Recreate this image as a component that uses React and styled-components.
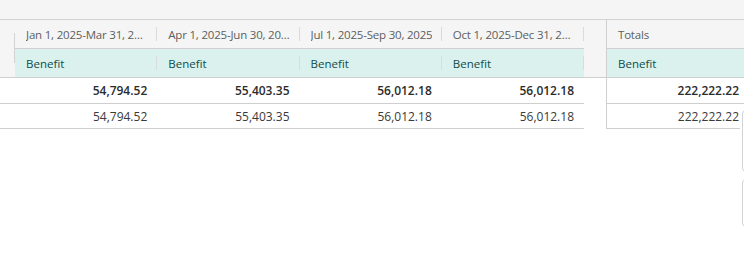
import React from 'react';
import styled, { createGlobalStyle } from 'styled-components';

const periods = [
  'Jan 1, 2025-Mar 31, 2025',
  'Apr 1, 2025-Jun 30, 2025',
  'Jul 1, 2025-Sep 30, 2025',
  'Oct 1, 2025-Dec 31, 2025',
];

const rows = [
  { bold: true, values: ['54,794.52', '55,403.35', '56,012.18', '56,012.18'], total: '222,222.22' },
  { bold: false, values: ['54,794.52', '55,403.35', '56,012.18', '56,012.18'], total: '222,222.22' },
];

const GlobalStyle = createGlobalStyle`
  html, body {
    margin: 0;
    padding: 0;
    background: #fff;
    overflow: hidden;
  }
  body {
    font-family: "Open Sans", "Liberation Sans", sans-serif;
    font-size: 12px;
    color: #333;
  }
`;

const Page = styled.div`
  position: relative;
  width: 744px;
  height: 253px;
  overflow: hidden;
`;

const TopBand = styled.div`
  height: 19px;
  background: #f4f5f4;
  border-bottom: 1px solid #d3d3d3;
`;

const Header = styled.div`
  display: flex;
  background: #f4f5f4;
  border-bottom: 1px solid #cfcfcf;
`;

const Gutter = styled.div`
  width: 15px;
  flex: none;
`;

const GutterLine = styled.div`
  width: 1px;
  height: 30px;
  margin: 13px 0 0 14px;
  background: #d3d3d3;
`;

const Periods = styled.div`
  width: 569px;
  flex: none;
  display: flex;
  flex-direction: column;
`;

const HeadRow = styled.div`
  display: flex;
  height: 28px;
  background: ${(p) => (p.$teal ? '#daf1ee' : 'transparent')};
  border-bottom: ${(p) => (p.$teal ? 'none' : '1px solid #cfcfcf')};
`;

const HeadCell = styled.div`
  position: relative;
  flex: 1;
  min-width: 0;
  display: flex;
  align-items: center;
  padding: 0 9px 0 11px;
  font-size: 11.5px;
  letter-spacing: ${(p) => (p.$teal ? '0' : '-0.2px')};
  color: ${(p) => (p.$teal ? '#0f4d48' : '#5c5f5f')};
  white-space: nowrap;
  overflow: hidden;

  &::after {
    content: '';
    display: ${(p) => (p.$noSep ? 'none' : 'block')};
    position: absolute;
    right: 0;
    top: 7px;
    height: 14px;
    width: 1px;
    background: #d9dcdb;
  }
`;

const Clip = styled.span`
  display: block;
  overflow: hidden;
  text-overflow: ellipsis;
  white-space: nowrap;
`;

const Gap = styled.div`
  width: 22px;
  flex: none;
`;

const TotalsCol = styled.div`
  width: 142px;
  flex: none;
  display: flex;
  flex-direction: column;
  border-left: 1px solid #cfcfcf;
`;

const Body = styled.div`
  display: flex;
`;

const MainRows = styled.div`
  width: 584px;
  flex: none;
`;

const DataRow = styled.div`
  display: flex;
  height: ${(p) => (p.$bold ? '25px' : '24px')};
  border-bottom: 1px solid #cfcfcf;
  font-weight: ${(p) => (p.$bold ? 600 : 400)};
  color: ${(p) => (p.$bold ? '#2b2b2b' : '#3a3a3a')};
`;

const GutterCell = styled.div`
  width: 15px;
  flex: none;
`;

const Num = styled.div`
  flex: 1;
  display: flex;
  align-items: center;
  justify-content: flex-end;
  padding: 0 10px;
  white-space: nowrap;
`;

const SidePanel = styled.div`
  position: absolute;
  left: 742px;
  top: ${(p) => p.$top}px;
  width: 24px;
  height: ${(p) => p.$h}px;
  background: #fff;
  border: 1px solid #d2d2d2;
  border-radius: 4px;
  box-shadow: -2px 0 0 #fff;
`;

export default function App() {
  return (
    <Page>
      <GlobalStyle />
      <TopBand />
      <Header>
        <Gutter>
          <GutterLine />
        </Gutter>
        <Periods>
          <HeadRow>
            {periods.map((p) => (
              <HeadCell key={p}>
                <Clip>{p}</Clip>
              </HeadCell>
            ))}
          </HeadRow>
          <HeadRow $teal>
            {periods.map((p) => (
              <HeadCell key={p} $teal>
                Benefit
              </HeadCell>
            ))}
          </HeadRow>
        </Periods>
        <Gap />
        <TotalsCol>
          <HeadRow>
            <HeadCell $noSep>Totals</HeadCell>
          </HeadRow>
          <HeadRow $teal>
            <HeadCell $teal $noSep>
              Benefit
            </HeadCell>
          </HeadRow>
        </TotalsCol>
      </Header>
      <Body>
        <MainRows>
          {rows.map((r, i) => (
            <DataRow key={i} $bold={r.bold}>
              <GutterCell />
              {r.values.map((v, j) => (
                <Num key={j}>{v}</Num>
              ))}
            </DataRow>
          ))}
        </MainRows>
        <Gap />
        <TotalsCol>
          {rows.map((r, i) => (
            <DataRow key={i} $bold={r.bold}>
              <Num>{r.total}</Num>
            </DataRow>
          ))}
        </TotalsCol>
      </Body>
      <SidePanel $top={110} $h={60} />
      <SidePanel $top={179} $h={46} />
    </Page>
  );
}
